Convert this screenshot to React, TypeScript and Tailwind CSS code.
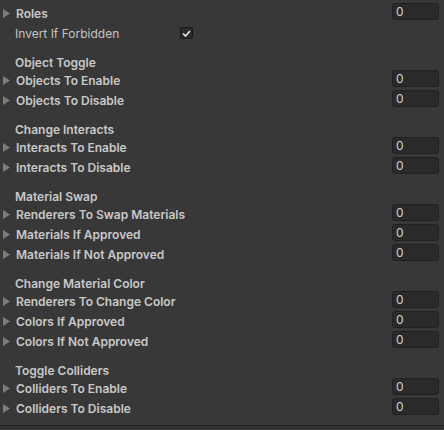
import React from 'react';

type Item =
  | { kind: 'array'; label: string }
  | { kind: 'header'; label: string }
  | { kind: 'toggle'; label: string; checked: boolean };

const items: Item[] = [
  { kind: 'array', label: 'Roles' },
  { kind: 'toggle', label: 'Invert If Forbidden', checked: true },
  { kind: 'header', label: 'Object Toggle' },
  { kind: 'array', label: 'Objects To Enable' },
  { kind: 'array', label: 'Objects To Disable' },
  { kind: 'header', label: 'Change Interacts' },
  { kind: 'array', label: 'Interacts To Enable' },
  { kind: 'array', label: 'Interacts To Disable' },
  { kind: 'header', label: 'Material Swap' },
  { kind: 'array', label: 'Renderers To Swap Materials' },
  { kind: 'array', label: 'Materials If Approved' },
  { kind: 'array', label: 'Materials If Not Approved' },
  { kind: 'header', label: 'Change Material Color' },
  { kind: 'array', label: 'Renderers To Change Color' },
  { kind: 'array', label: 'Colors If Approved' },
  { kind: 'array', label: 'Colors If Not Approved' },
  { kind: 'header', label: 'Toggle Colliders' },
  { kind: 'array', label: 'Colliders To Enable' },
  { kind: 'array', label: 'Colliders To Disable' },
];

const Arrow = () => (
  <svg width="7" height="9" viewBox="0 0 7 9" className="shrink-0">
    <path d="M0 0 L7 4.5 L0 9 Z" fill="#7c7c7c" />
  </svg>
);

const SizeField = () => (
  <div className="ml-auto -mt-px h-[17px] w-[47px] self-start rounded-[3px] border border-[#212121] bg-[#2a2a2a] pl-[3px] text-[12px] leading-[15px] text-[#d2d2d2]">
    0
  </div>
);

const Row: React.FC<{ item: Item }> = ({ item }) => {
  if (item.kind === 'header') {
    return (
      <div className="mt-[9px] flex h-[18px] items-center pl-[15px] pt-px font-semibold text-[#c8c8c8]">
        {item.label}
      </div>
    );
  }

  if (item.kind === 'toggle') {
    return (
      <div className="mb-[2px] flex h-[18px] items-center pr-[5px]">
        <span className="w-[180px] shrink-0 pl-[15px] pt-px text-[#c4c4c4]">{item.label}</span>
        <div className="flex h-[12px] w-[13px] items-center justify-center rounded-[2px] border border-[#1a1a1a] bg-[#2a2a2a]">
          {item.checked && (
            <svg width="9" height="7" viewBox="0 0 9 7">
              <path d="M1 3.5 L3.5 6 L8 1" stroke="#e8e8e8" strokeWidth="1.6" fill="none" />
            </svg>
          )}
        </div>
      </div>
    );
  }

  return (
    <div className="mb-[2px] flex h-[18px] items-center pr-[5px]">
      <div className="flex w-[16px] pl-[3px]">
        <Arrow />
      </div>
      <span className="pt-px font-semibold text-[#c8c8c8]">{item.label}</span>
      <SizeField />
    </div>
  );
};

export default function App() {
  return (
    <div
      className="flex h-[430px] w-[444px] flex-col bg-[#383838] text-[12px]"
      style={{ fontFamily: 'Inter, "Noto Sans", sans-serif' }}
    >
      <div className="flex flex-col pt-[4px]">
        {items.map((item, i) => (
          <Row key={i} item={item} />
        ))}
      </div>
      <div className="mt-auto h-[5px] border-t border-[#1f1f1f] bg-[#323232]" />
    </div>
  );
}
